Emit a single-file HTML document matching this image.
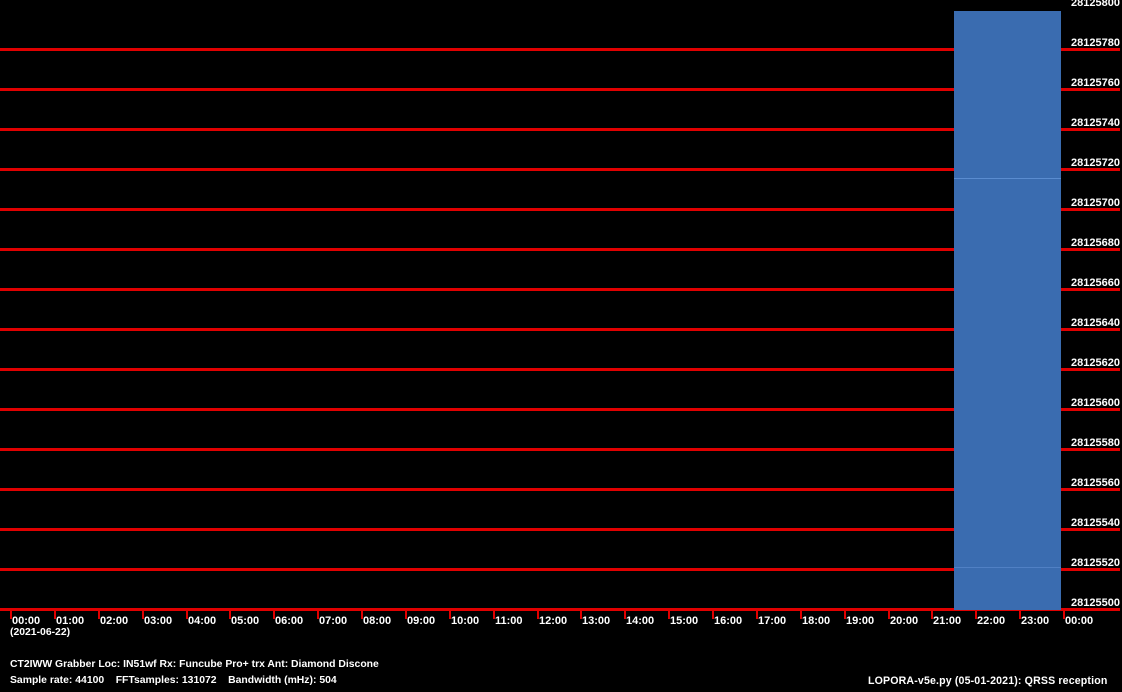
<!DOCTYPE html><html><head><style>
body{margin:0;width:1122px;height:692px;background:#000;overflow:hidden;position:relative;font:bold 11px "Liberation Sans",sans-serif;color:#fff}
.h{position:absolute;left:0;width:1120px;height:3px;background:#e00000}
.t{position:absolute;width:2px;height:10px;top:609px;background:#e00000}
.l{position:absolute;line-height:12px;white-space:pre}
.b{position:absolute;line-height:12px;white-space:pre;font-size:10.4px}
</style></head><body>
<div id="c"></div>
<div style="position:absolute;left:954px;top:11px;width:107px;height:599px;background:#3a6cb0;z-index:2"></div>
<div style="position:absolute;left:954px;top:178px;width:107px;height:1px;background:#5a8cd0;z-index:3"></div>
<div style="position:absolute;left:954px;top:567px;width:107px;height:1px;background:#5080c4;z-index:3"></div>
<script>
var c=document.getElementById('c'),h='';
for(var i=0;i<15;i++){var y=48+i*40;h+='<div class="h" style="top:'+y+'px"></div>';}
for(var i=0;i<=15;i++){var y=-4+i*40;h+='<div class="l" style="left:1071px;top:'+(y+1)+'px">'+(28125800-i*20)+'</div>';}
for(var i=0;i<=24;i++){var x=Math.round(10+i*43.875);var s=(i%24<10?'0':'')+(i%24)+':00';h+='<div class="t" style="left:'+x+'px"></div><div class="l" style="left:'+(x+2)+'px;top:615px">'+s+'</div>';}
c.innerHTML=h;
</script>
<div class="b" style="left:10px;top:627px">(2021-06-22)</div>
<div class="b" style="left:10px;top:659px">CT2IWW Grabber Loc: IN51wf Rx: Funcube Pro+ trx Ant: Diamond Discone</div>
<div class="b" style="left:10px;top:675px">Sample rate: 44100    FFTsamples: 131072    Bandwidth (mHz): 504</div>
<div class="b" style="left:868px;top:675px;font-size:10.6px;letter-spacing:0.15px">LOPORA-v5e.py (05-01-2021): QRSS reception</div>
</body></html>
